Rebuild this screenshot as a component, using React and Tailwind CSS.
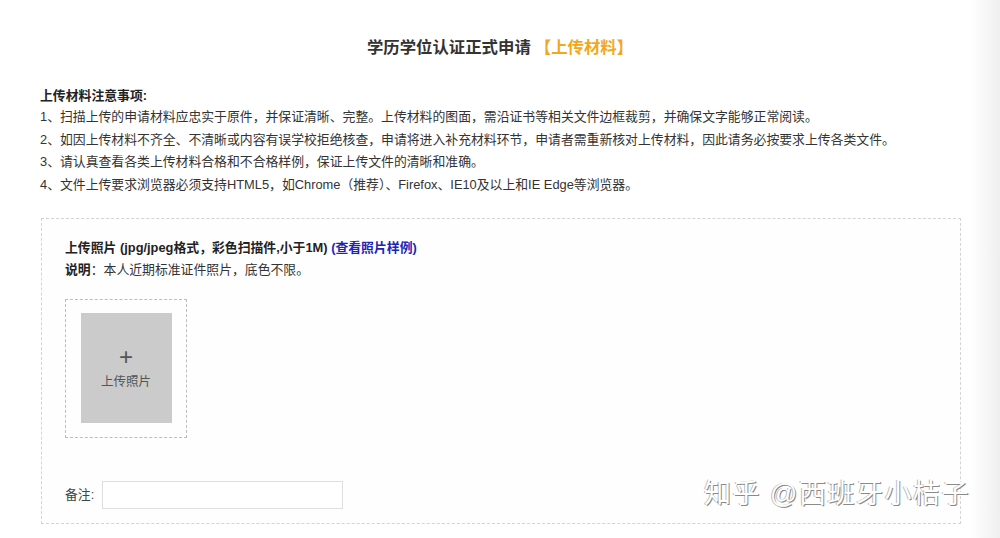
export default function App() {
  const notes = [
    '1、扫描上传的申请材料应忠实于原件，并保证清晰、完整。上传材料的图面，需沿证书等相关文件边框裁剪，并确保文字能够正常阅读。',
    '2、如因上传材料不齐全、不清晰或内容有误学校拒绝核查，申请将进入补充材料环节，申请者需重新核对上传材料，因此请务必按要求上传各类文件。',
    '3、请认真查看各类上传材料合格和不合格样例，保证上传文件的清晰和准确。',
    '4、文件上传要求浏览器必须支持HTML5，如Chrome（推荐）、Firefox、IE10及以上和IE Edge等浏览器。',
  ]

  return (
    <div
      className="relative w-[1000px] h-[538px] overflow-hidden bg-[linear-gradient(to_right,#ffffff_0%,#ffffff_97%,#efefef_100%)] text-[#333] font-['Helvetica','Liberation_Sans','Noto_Sans_CJK_SC',sans-serif]"
    >
      {/* 标题 */}
      <div className="pt-[36px] text-center text-[16.4px] leading-[22px] font-bold text-[#333]">
        学历学位认证正式申请
        <span className="ml-[4px] text-[#f0a81c]">【上传材料】</span>
      </div>

      {/* 注意事项 */}
      <div className="pl-[40px] mt-[28px] text-[12.85px]">
        <div className="font-bold leading-[20px] text-[#222]">上传材料注意事项:</div>
        {notes.map((n) => (
          <div key={n} className="leading-[22.7px] whitespace-nowrap">{n}</div>
        ))}
      </div>

      {/* 上传区域 */}
      <div className="ml-[41px] mt-[21px] w-[920px] h-[306px] border border-dashed border-[#d4d4d4] bg-[#fefefe] pl-[23px] pt-[18px] text-[12.85px]">
        <div className="leading-[22px] font-semibold text-[#222]">
          上传照片 (jpg/jpeg格式，彩色扫描件,小于1M){' '}
          <span className="text-[#1f24b8] font-bold">(查看照片样例)</span>
        </div>
        <div className="leading-[22px]">
          <span className="font-bold text-[#222]">说明</span>：本人近期标准证件照片，底色不限。
        </div>

        <div className="mt-[18px] w-[122px] h-[139px] border border-dashed border-[#bdbdbd] flex items-center justify-center">
          <div className="w-[91px] h-[110px] bg-[#cbcbcb] flex flex-col items-center justify-center text-[#555]">
            <div className="text-[24px] leading-[22px]">+</div>
            <div className="mt-[6px] text-[12.5px] leading-[16px]">上传照片</div>
          </div>
        </div>

        <div className="mt-[43px] flex items-center">
          <span className="text-[12.85px] text-[#444]">备注:</span>
          <input className="ml-[8px] w-[241px] h-[28px] border border-[#dedede] bg-white outline-none" />
        </div>
      </div>

      {/* 水印 */}
      <div className="absolute left-[704px] top-[477px] text-[27px] leading-[34px] tracking-[1.5px] text-white [text-shadow:1px_1px_0_#8a8a8a,-1px_0_0_#bbbbbb]">
        知乎 @西班牙小桔子
      </div>
    </div>
  )
}
